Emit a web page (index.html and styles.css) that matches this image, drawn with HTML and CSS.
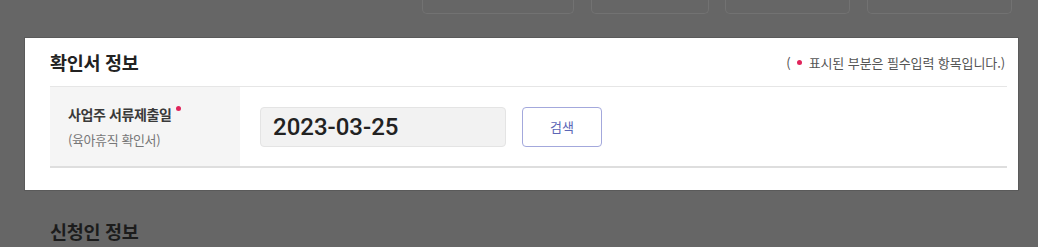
FILE: index.html
```html
<!DOCTYPE html>
<html lang="ko">
<head>
    <meta charset="UTF-8">
    <meta name="viewport" content="width=device-width, initial-scale=1.0">
    <title>확인서 정보</title>
    <link rel="stylesheet" href="styles.css">
</head>
<body>
    <div class="top-buttons">
        <div class="top-btn btn-a"></div>
        <div class="top-btn btn-b"></div>
        <div class="top-btn btn-c"></div>
        <div class="top-btn btn-d"></div>
    </div>

    <section class="panel">
        <div class="panel-head">
            <h2 class="panel-title">확인서 정보</h2>
            <p class="req-note">( <span class="dot"></span> 표시된 부분은 필수입력 항목입니다.)</p>
        </div>
        <div class="form-row">
            <div class="label-cell">
                <div class="label-main">사업주 서류제출일 <span class="dot dot-sup"></span></div>
                <div class="label-sub">(육아휴직 확인서)</div>
            </div>
            <div class="value-cell">
                <div class="date-input">2023-03-25</div>
                <button class="search-btn" type="button">검색</button>
            </div>
        </div>
    </section>

    <h2 class="section-title">신청인 정보</h2>
</body>
</html>
```

FILE: styles.css
```css
body {
    margin: 0;
    background: #666666;
    font-family: "Noto Sans CJK KR", "Noto Sans", sans-serif;
    color: #222;
}
.top-buttons {
    display: flex;
    height: 14px;
    padding-left: 422px;
}
.top-btn {
    height: 13px;
    border: 1px solid #727272;
    border-top: none;
    border-radius: 0 0 5px 5px;
}
.btn-a { width: 150px; margin-right: 17px; }
.btn-b { width: 116px; margin-right: 16px; }
.btn-c { width: 123px; margin-right: 17px; }
.btn-d { width: 143px; }

.panel {
    margin: 24px 0 0 25px;
    width: 993px;
    background: #fff;
    box-shadow: 0 0 0 1px #5a5a5a;
    padding: 0 11px 22px 25px;
    box-sizing: border-box;
}
.panel-head {
    display: flex;
    justify-content: space-between;
    align-items: center;
    height: 48px;
    padding-right: 2px;
}
.panel-title {
    margin: 0;
    font-size: 18.5px;
    font-weight: 700;
    color: #222;
    letter-spacing: -0.3px;
}
.req-note {
    margin: 0;
    font-size: 13px;
    color: #555;
    letter-spacing: -0.1px;
}
.dot {
    display: inline-block;
    width: 5px;
    height: 5px;
    border-radius: 50%;
    background: #e0245b;
    vertical-align: middle;
    margin: 0 3px 2px;
}
.dot-sup {
    vertical-align: top;
    margin: 2px 0 0 1px;
}
.form-row {
    display: flex;
    height: 79px;
    border-top: 1px solid #e6e6e6;
    border-bottom: 2px solid #dedede;
}
.label-cell {
    width: 190px;
    background: #f5f5f5;
    padding-left: 18px;
    box-sizing: border-box;
    display: flex;
    flex-direction: column;
    justify-content: center;
    gap: 6px;
}
.label-main {
    font-size: 14px;
    font-weight: 700;
    color: #3a3a3a;
    letter-spacing: -0.4px;
}
.label-sub {
    font-size: 13px;
    color: #777;
    letter-spacing: -0.4px;
}
.value-cell {
    display: flex;
    align-items: center;
    padding-left: 20px;
    gap: 16px;
}
.date-input {
    width: 246px;
    height: 40px;
    box-sizing: border-box;
    background: #f2f2f2;
    border: 1px solid #e4e4e4;
    border-radius: 4px;
    padding-left: 12px;
    display: flex;
    align-items: center;
    font-family: Roboto, "Noto Sans", sans-serif;
    font-size: 24px;
    font-weight: 500;
    color: #222;
}
.search-btn {
    width: 80px;
    height: 40px;
    background: #fff;
    border: 1px solid #a3a8dc;
    border-radius: 4px;
    font-family: inherit;
    font-size: 13px;
    color: #5c66b6;
    cursor: pointer;
}
.section-title {
    margin: 28px 0 0 50px;
    font-size: 18.5px;
    font-weight: 700;
    color: #1c1c1c;
    letter-spacing: -0.3px;
}
```
